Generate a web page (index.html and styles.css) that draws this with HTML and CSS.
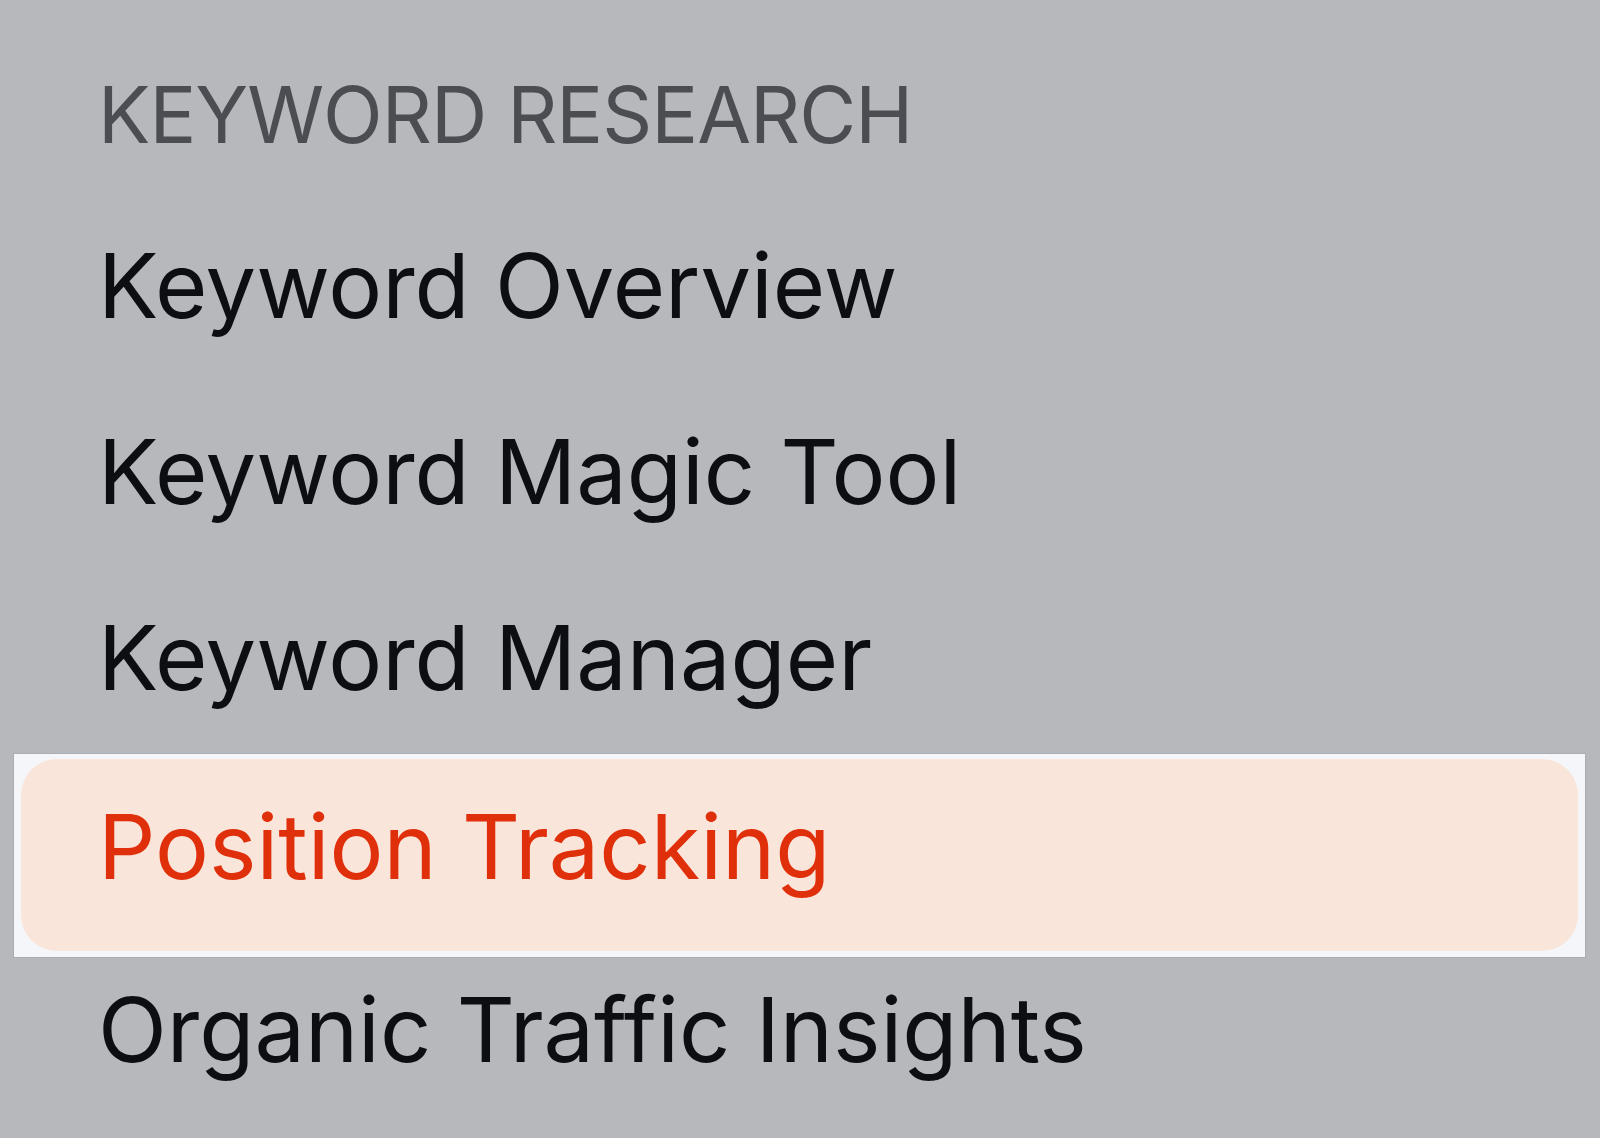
FILE: index.html
```html
<!DOCTYPE html>
<html lang="en">
<head>
    <meta charset="UTF-8">
    <meta name="viewport" content="width=device-width, initial-scale=1.0">
    <title>Keyword Research</title>
    <link rel="stylesheet" href="styles.css">
</head>
<body>
    <nav class="side-menu">
        <h2 class="menu-title">KEYWORD RESEARCH</h2>
        <ul class="menu-list">
            <li class="menu-item"><a href="#">Keyword Overview</a></li>
            <li class="menu-item"><a href="#">Keyword Magic Tool</a></li>
            <li class="menu-item"><a href="#">Keyword Manager</a></li>
            <li class="menu-item active"><a href="#">Position Tracking</a></li>
            <li class="menu-item"><a href="#">Organic Traffic Insights</a></li>
        </ul>
    </nav>
</body>
</html>
```

FILE: styles.css
```css
* {
    margin: 0;
    padding: 0;
    box-sizing: border-box;
}

a {
    text-decoration: none;
    color: inherit;
}

body {
    font-family: 'Inter', 'Noto Sans', sans-serif;
    background-color: #b7b8bc;
    color: #0d0e12;
    height: 1138px;
    overflow: hidden;
}

.side-menu {
    padding: 68px 15px 0 14px;
}

.menu-title {
    padding-left: 84px;
    margin-bottom: 31px;
    font-size: 78px;
    font-weight: 400;
    line-height: 1.21;
    letter-spacing: -1px;
    color: #4c4d53;
}

.menu-list {
    list-style: none;
}

.menu-item {
    padding-left: 84px;
    font-size: 90px;
    line-height: 186px;
    white-space: nowrap;
}

/* 选中项：外层浅色框 + 内层圆角底色 */
.menu-item.active {
    height: 203px;
    margin: 3px 0 -20px;
    padding: 5px 7px 6px;
    background: #f5f6f9;
    box-shadow: 0 0 0 1px rgba(0, 0, 0, 0.06);
}

.menu-item.active a {
    display: block;
    height: 192px;
    padding-left: 77px;
    line-height: 175px;
    border-radius: 36px;
    background: #fae5db;
    color: #e0300b;
}
```
